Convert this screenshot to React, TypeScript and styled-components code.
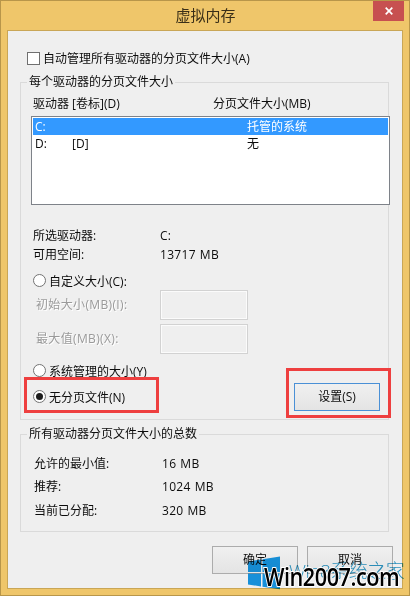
import React from "react";
import styled, { createGlobalStyle, css } from "styled-components";

const GlobalStyle = createGlobalStyle`
  *, *::before, *::after { box-sizing: border-box; }
  body {
    margin: 0;
    overflow: hidden;
    font-family: "Open Sans", "Noto Sans CJK SC", sans-serif;
    font-size: 12px;
    line-height: 18px;
    color: #0c0c0c;
    white-space: nowrap;
  }
`;

const Window = styled.div`
  position: relative;
  display: flex;
  flex-direction: column;
  width: 410px;
  height: 596px;
  padding: 0 6px 6px;
  background: #efc66a;
  border: 1px solid #b8964a;
`;

const TitleBar = styled.header`
  display: grid;
  grid-template-columns: 31px 1fr 31px;
  height: 29px;
  margin-right: -1px;
`;

const Title = styled.h1`
  margin: 3px 0 0;
  font-size: 15px;
  line-height: 22px;
  font-weight: 400;
  text-align: center;
  color: #3a2f18;
`;

const CloseButton = styled.button`
  display: flex;
  align-items: center;
  justify-content: center;
  width: 31px;
  height: 20px;
  padding: 0 0 0 1px;
  border: 0;
  background: #c75050;
`;

const Client = styled.main`
  flex: 1;
  display: flex;
  flex-direction: column;
  padding: 19px 12px 0;
  background: #efefef;
  border: 1px solid #c9a656;
`;

const Option = styled.label<{ $top?: number }>`
  display: flex;
  align-items: center;
  gap: 3px;
  height: 18px;
  margin-top: ${(p) => p.$top ?? 0}px;
`;

const AutoManage = styled(Option)`
  margin-left: 7px;
`;

const Checkbox = styled.span`
  width: 13px;
  height: 13px;
  margin-bottom: 2px;
  background: #fff;
  border: 1px solid #707070;
`;

const Radio = styled.span<{ $checked?: boolean }>`
  display: flex;
  align-items: center;
  justify-content: center;
  width: 13px;
  height: 13px;
  margin-bottom: 3px;
  border: 1px solid #737373;
  border-radius: 50%;
  background: #fff;
  ${(p) =>
    p.$checked &&
    css`
      &::after {
        content: "";
        width: 7px;
        height: 7px;
        border-radius: 50%;
        background: #1c1c1c;
      }
    `}
`;

const Group = styled.section<{ $top: number; $height: number }>`
  width: 369px;
  height: ${(p) => p.$height}px;
  margin-top: ${(p) => p.$top}px;
  border: 1px solid #dadada;
`;

const Legend = styled.h2`
  width: max-content;
  margin: -10px 0 0 6px;
  padding: 0 2px;
  font-size: 12px;
  line-height: 18px;
  font-weight: 400;
  background: #efefef;
`;

const ListHeader = styled.div`
  display: grid;
  grid-template-columns: 180px 1fr;
  margin: 4px 0 0 12px;
`;

const DriveList = styled.div`
  width: 359px;
  height: 89px;
  margin: 3px 0 0 10px;
  padding: 1px;
  background: #fff;
  border: 1px solid #7e8289;
`;

const DriveRow = styled.div<{ $selected?: boolean }>`
  display: grid;
  grid-template-columns: 37px 175px 1fr;
  height: 17px;
  padding-left: 2px;
  line-height: 17px;
  color: ${(p) => (p.$selected ? "#fff" : "#0c0c0c")};
  background: ${(p) => (p.$selected ? "#3399ff" : "transparent")};
`;

const Info = styled.dl<{ $top: number; $left: number; $pitch: number; $col: number }>`
  display: grid;
  grid-template-columns: ${(p) => p.$col}px 1fr;
  grid-auto-rows: ${(p) => p.$pitch}px;
  align-items: center;
  margin: ${(p) => p.$top}px 0 0 ${(p) => p.$left}px;
  dd {
    margin: 0;
    letter-spacing: 0.3px;
    word-spacing: 0.6px;
  }
`;

const Choices = styled.div`
  margin: 9px 0 0 12px;
`;

const SizeField = styled.div<{ $top: number }>`
  display: grid;
  grid-template-columns: 124px 88px;
  align-items: center;
  height: 30px;
  margin: ${(p) => p.$top}px 0 0 3px;
  letter-spacing: 0.35px;
  color: #9a9a9a;
  text-shadow: 1px 1px 0 #fff;
`;

const SizeInput = styled.span`
  height: 30px;
  border: 1px solid #d2d2d2;
  box-shadow: inset 0 0 0 1px #fbfbfb;
`;

const PushButton = styled.button<{ $primary?: boolean }>`
  width: 86px;
  height: 28px;
  padding: 0;
  font: inherit;
  line-height: 18px;
  color: inherit;
  background: linear-gradient(#f0f0f0, #e4e4e4);
  border: 1px solid ${(p) => (p.$primary ? "#4a90d6" : "#acacac")};
`;

const Marker = styled.div<{ $x: number; $y: number; $w: number; $h: number }>`
  position: absolute;
  left: ${(p) => p.$x}px;
  top: ${(p) => p.$y}px;
  width: ${(p) => p.$w}px;
  height: ${(p) => p.$h}px;
  border: 3px solid #ee3f3f;
`;

const ApplyRow = styled.div`
  display: flex;
  justify-content: space-between;
  align-items: flex-start;
  height: 28px;
  margin: 2px 8px 0 0;
`;

const Footer = styled.footer`
  display: flex;
  justify-content: flex-end;
  gap: 9px;
  margin: 14px -3px 0 0;
`;

const Watermark = styled.div`
  position: absolute;
  left: 247px;
  top: 555px;
  width: 162px;
  height: 40px;
`;

const Logo = styled.svg`
  position: absolute;
  left: 0;
  top: 0;
  mix-blend-mode: multiply;
`;

const SiteName = styled.span`
  position: absolute;
  left: 41px;
  top: 2px;
  font-size: 19px;
  line-height: 26px;
  font-weight: 300;
  letter-spacing: -0.5px;
  color: #2f9bca;
  mix-blend-mode: multiply;
`;

const SiteUrl = styled.span`
  position: absolute;
  left: 16px;
  top: 3px;
  font-family: "Open Sans", sans-serif;
  font-size: 26px;
  line-height: 34px;
  font-weight: 600;
  letter-spacing: -0.6px;
  color: #000;
  -webkit-text-stroke: 2px #fff;
  paint-order: stroke fill;
  transform: scaleX(0.835);
  transform-origin: 0 0;
`;

export default function App() {
  return (
    <>
      <GlobalStyle />
      <Window>
        <TitleBar>
          <span />
          <Title>虚拟内存</Title>
          <CloseButton aria-label="关闭">
            <svg width="8" height="8" viewBox="0 0 8 8">
              <path d="M.7.7 7.3 7.3M7.3.7.7 7.3" stroke="#fff" strokeWidth="1.7" />
            </svg>
          </CloseButton>
        </TitleBar>
        <Client>
          <AutoManage>
            <Checkbox />
            自动管理所有驱动器的分页文件大小(A)
          </AutoManage>
          <Group $top={14} $height={338}>
            <Legend>每个驱动器的分页文件大小</Legend>
            <ListHeader>
              <span>驱动器 [卷标](D)</span>
              <span>分页文件大小(MB)</span>
            </ListHeader>
            <DriveList>
              <DriveRow $selected>
                <span>C:</span>
                <span />
                <span>托管的系统</span>
              </DriveRow>
              <DriveRow>
                <span>D:</span>
                <span>[D]</span>
                <span>无</span>
              </DriveRow>
            </DriveList>
            <Info $top={22} $left={12} $pitch={18.5} $col={127}>
              <dt>所选驱动器:</dt>
              <dd>C:</dd>
              <dt>可用空间:</dt>
              <dd>13717 MB</dd>
            </Info>
            <Choices>
              <Option>
                <Radio />
                自定义大小(C):
              </Option>
              <SizeField $top={-1}>
                初始大小(MB)(I):
                <SizeInput />
              </SizeField>
              <SizeField $top={4}>
                最大值(MB)(X):
                <SizeInput />
              </SizeField>
              <Option $top={9}>
                <Radio />
                系统管理的大小(Y)
              </Option>
              <ApplyRow>
                <Option $top={6}>
                  <Radio $checked />
                  无分页文件(N)
                </Option>
                <PushButton $primary>设置(S)</PushButton>
              </ApplyRow>
            </Choices>
          </Group>
          <Group $top={14} $height={98}>
            <Legend>所有驱动器分页文件大小的总数</Legend>
            <Info $top={9} $left={13} $pitch={23.5} $col={128}>
              <dt>允许的最小值:</dt>
              <dd>16 MB</dd>
              <dt>推荐:</dt>
              <dd>1024 MB</dd>
              <dt>当前已分配:</dt>
              <dd>320 MB</dd>
            </Info>
          </Group>
          <Footer>
            <PushButton>确定</PushButton>
            <PushButton>取消</PushButton>
          </Footer>
        </Client>
        <Marker $x={23} $y={376} $w={135} $h={36} />
        <Marker $x={285} $y={367} $w={105} $h={50} />
        <Watermark>
          <Logo width="33" height="34" viewBox="0 0 33 34">
            <path
              d="M0 5.5 13 3.4V16H0ZM14.5 3.2 32 .5V16H14.5ZM0 17.5H13V30.5L0 28.4ZM14.5 17.5H32V33.3L14.5 30.7Z"
              fill="#189ae8"
            />
          </Logo>
          <SiteName>Win8系统之家</SiteName>
          <SiteUrl>Win2007.com</SiteUrl>
        </Watermark>
      </Window>
    </>
  );
}
